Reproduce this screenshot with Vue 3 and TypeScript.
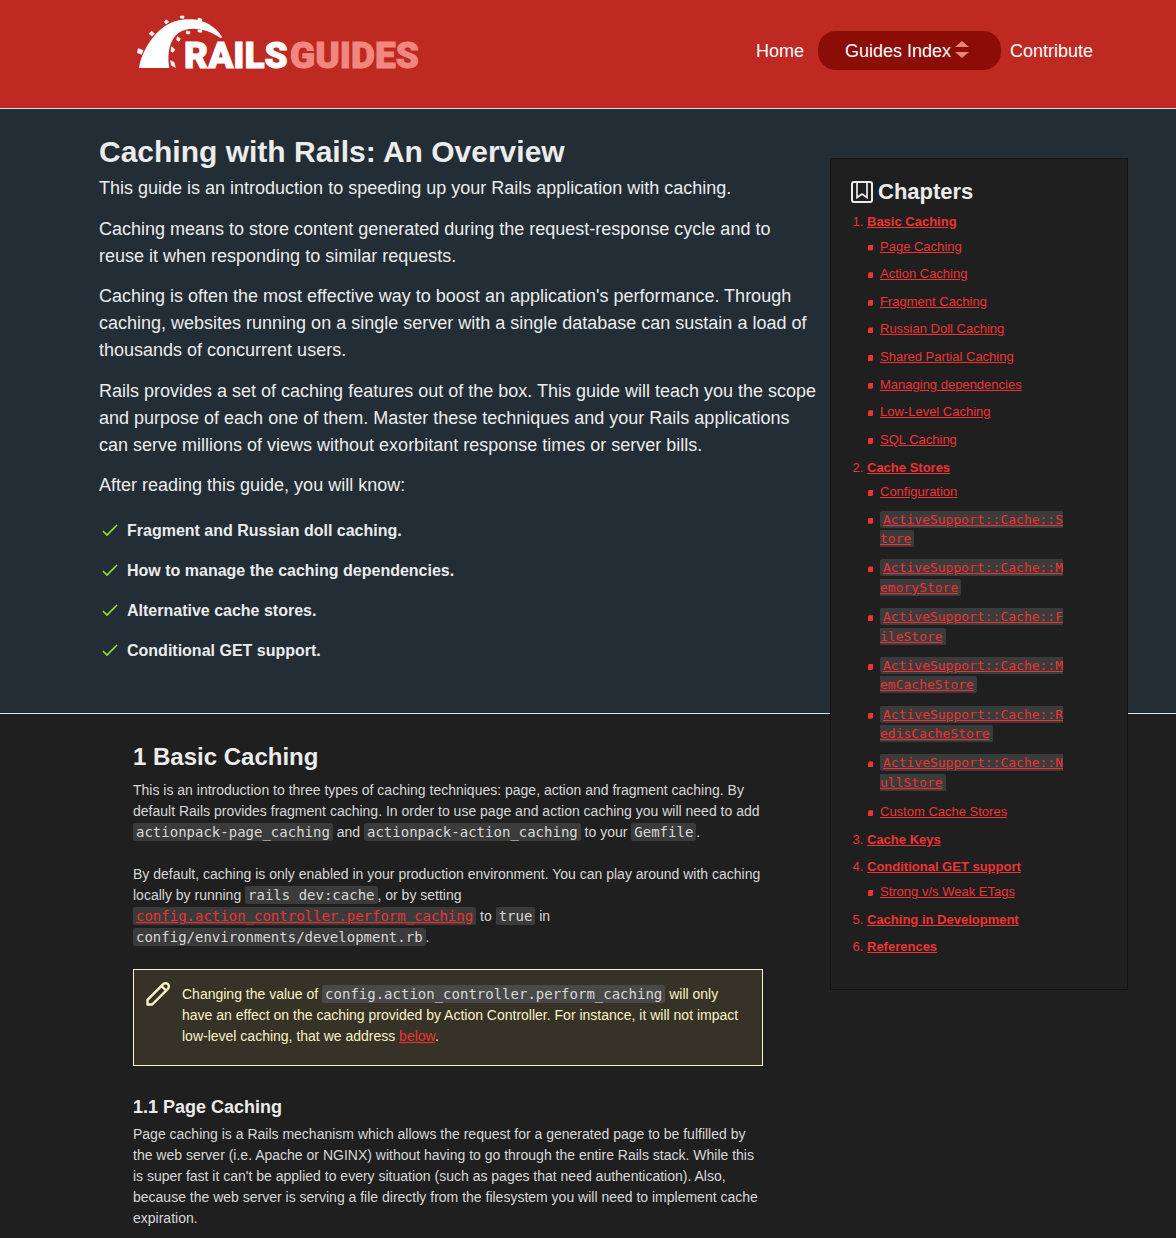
<script setup lang="ts">
interface Topic {
  label: string
  code?: boolean
}

interface Chapter {
  title: string
  topics: Topic[]
}

const chapters: Chapter[] = [
  {
    title: 'Basic Caching',
    topics: [
      { label: 'Page Caching' },
      { label: 'Action Caching' },
      { label: 'Fragment Caching' },
      { label: 'Russian Doll Caching' },
      { label: 'Shared Partial Caching' },
      { label: 'Managing dependencies' },
      { label: 'Low-Level Caching' },
      { label: 'SQL Caching' },
    ],
  },
  {
    title: 'Cache Stores',
    topics: [
      { label: 'Configuration' },
      { label: 'ActiveSupport::Cache::Store', code: true },
      { label: 'ActiveSupport::Cache::MemoryStore', code: true },
      { label: 'ActiveSupport::Cache::FileStore', code: true },
      { label: 'ActiveSupport::Cache::MemCacheStore', code: true },
      { label: 'ActiveSupport::Cache::RedisCacheStore', code: true },
      { label: 'ActiveSupport::Cache::NullStore', code: true },
      { label: 'Custom Cache Stores' },
    ],
  },
  { title: 'Cache Keys', topics: [] },
  { title: 'Conditional GET support', topics: [{ label: 'Strong v/s Weak ETags' }] },
  { title: 'Caching in Development', topics: [] },
  { title: 'References', topics: [] },
]

const goals: string[] = [
  'Fragment and Russian doll caching.',
  'How to manage the caching dependencies.',
  'Alternative cache stores.',
  'Conditional GET support.',
]

const slug = (text: string): string => '#' + text.toLowerCase().replace(/[^a-z]+/g, '-')
</script>

<template>
  <div class="page">
    <header class="topbar">
      <a class="logo" href="#home" aria-label="Rails Guides">
        <svg width="290" height="68" viewBox="0 0 290 68">
          <svg width="86" height="54" viewBox="21 21 258 162" fill="#fff">
            <path d="M27 180C32 140 62 84 104 55C128 38 157 32 186 34C225 37 257 56 277 88L271 90C246 72 216 61 187 62C160 63 139 74 128 95C115 119 113 148 118 180Z" />
            <path stroke="#fff" stroke-width="2" d="M25 122L39 127L35 139L22 134ZM65 70L73 77L66 84L57 77ZM109 35L116 42L108 48L103 41ZM151 24L162 24L161 31L151 30ZM205 30L216 34L213 41L203 38ZM203 66L215 66L215 73L205 72ZM169 69L180 71L178 78L169 77ZM142 86L151 92L147 100L140 96ZM125 116L135 125L129 133L123 130ZM122 158L132 163L136 178L124 172Z" />
          </svg>
          <text class="logo-text" x="47" y="53" fill="#fff" stroke="#fff">RAILS</text>
          <text class="logo-text" x="153" y="53" fill="#f08880" stroke="#f08880">GUIDES</text>
        </svg>
      </a>
      <nav class="nav">
        <a class="nav-link" href="#home">Home</a>
        <button class="index-button" type="button">
          Guides Index
          <svg width="14" height="22" viewBox="0 0 14 22" fill="#e9827b">
            <path d="M7 0L14 6H0ZM0 11H14L7 17Z" />
          </svg>
        </button>
        <a class="nav-link" href="#contribute">Contribute</a>
      </nav>
    </header>

    <div class="content">
      <section class="feature">
        <h1>Caching with Rails: An Overview</h1>
        <p>This guide is an introduction to speeding up your Rails application with caching.</p>
        <p>Caching means to store content generated during the request-response cycle and to reuse it when responding to similar requests.</p>
        <p>Caching is often the most effective way to boost an application's performance. Through caching, websites running on a single server with a single database can sustain a load of thousands of concurrent users.</p>
        <p>Rails provides a set of caching features out of the box. This guide will teach you the scope and purpose of each one of them. Master these techniques and your Rails applications can serve millions of views without exorbitant response times or server bills.</p>
        <p>After reading this guide, you will know:</p>
        <ul class="goals">
          <li v-for="goal in goals" :key="goal">
            <svg width="20" height="20" viewBox="0 0 20 20" fill="none" stroke="#9be22d" stroke-width="1.6">
              <path d="M4 10L8 14L18 4" />
            </svg>
            {{ goal }}
          </li>
        </ul>
      </section>

      <main class="article">
        <h2>1 Basic Caching</h2>
        <p>This is an introduction to three types of caching techniques: page, action and fragment caching. By default Rails provides fragment caching. In order to use page and action caching you will need to add <code>actionpack-page_caching</code> and <code>actionpack-action_caching</code> to your <code>Gemfile</code>.</p>
        <p>By default, caching is only enabled in your production environment. You can play around with caching locally by running <code>rails dev:cache</code>, or by setting <a href="#perform-caching"><code>config.action_controller.perform_caching</code></a> to <code>true</code> in <code>config/environments/development.rb</code>.</p>
        <aside class="note">
          <svg width="26" height="26" viewBox="0 0 26 26" fill="none" stroke="#fbf3c4" stroke-width="2.4" stroke-linejoin="round">
            <path d="M2.500 23.500V18.800L18.200 3.100Q20.500 1.200 22.900 3.100Q24.800 5.500 22.900 7.800L7.200 23.500ZM16.500 5L21 9.500" />
          </svg>
          <p>Changing the value of <code>config.action_controller.perform_caching</code> will only have an effect on the caching provided by Action Controller. For instance, it will not impact low-level caching, that we address <a href="#low-level-caching">below</a>.</p>
        </aside>
        <h3>1.1 Page Caching</h3>
        <p>Page caching is a Rails mechanism which allows the request for a generated page to be fulfilled by the web server (i.e. Apache or NGINX) without having to go through the entire Rails stack. While this is super fast it can't be applied to every situation (such as pages that need authentication). Also, because the web server is serving a file directly from the filesystem you will need to implement cache expiration.</p>
      </main>

      <nav class="chapters" aria-label="Chapters">
        <h2>
          <svg width="22" height="22" viewBox="0 0 22 22" fill="none" stroke="#ececec">
            <rect x="1" y="1" width="20" height="20" rx="2" stroke-width="2" />
            <path d="M6 2V16.500L11 13L16 16.500V2" stroke-width="1.700" />
          </svg>
          Chapters
        </h2>
        <ol>
          <li v-for="chapter in chapters" :key="chapter.title">
            <a class="chapter-link" :href="slug(chapter.title)">{{ chapter.title }}</a>
            <ul v-if="chapter.topics.length">
              <li v-for="topic in chapter.topics" :key="topic.label" :class="{ 'code-topic': topic.code }">
                <a :href="slug(topic.label)"><code v-if="topic.code">{{ topic.label }}</code><template v-else>{{ topic.label }}</template></a>
              </li>
            </ul>
          </li>
        </ol>
      </nav>
    </div>
  </div>
</template>

<style>
body {
  margin: 0;
  background: #1f1f1f;
}
</style>

<style scoped>
.page {
  font-family: "Liberation Sans", Arial, sans-serif;
  font-size: 14px;
  line-height: 21px;
  color: #d8d8d8;
  background: #1f1f1f;
}

h1,
h2,
h3,
p,
ol,
ul {
  margin: 0;
  padding: 0;
}

h1,
h2,
h3 {
  color: #ececec;
}

a {
  color: #ee3333;
}

code {
  padding: 1px 3px;
  border-radius: 2px;
  background: #3b3b3b;
  font-family: "DejaVu Sans Mono", monospace;
  font-size: inherit;
}

.topbar {
  display: flex;
  justify-content: space-between;
  align-items: flex-start;
  box-sizing: border-box;
  height: 109px;
  padding: 15px 83px 0 137px;
  border-bottom: 1px solid #c5e2ea;
  background: #be2922;
}

.logo svg {
  display: block;
}

.logo-text {
  font-family: Roboto, sans-serif;
  font-size: 37px;
  font-weight: 900;
  stroke-width: 1px;
}

.nav {
  display: flex;
  align-items: center;
  margin-top: 16px;
  font-size: 18px;
}

.nav-link {
  padding-top: 2px;
  color: #fff;
  text-decoration: none;
}

.index-button {
  display: flex;
  align-items: center;
  justify-content: center;
  gap: 4px;
  box-sizing: border-box;
  width: 183px;
  height: 39px;
  margin: 0 9px 0 14px;
  padding: 2px 5px 0 0;
  border: 0;
  border-radius: 18px;
  background: #8c0d08;
  color: #fff;
  font: inherit;
}

.content {
  position: relative;
}

.feature {
  padding: 25px 358px 34px 99px;
  border-bottom: 1px solid #d4e6ee;
  background: #222d36;
  color: #ececec;
  font-size: 18px;
  line-height: 27px;
}

.feature h1 {
  margin-bottom: 5px;
  font-size: 30px;
  line-height: 36px;
}

.feature p {
  margin-bottom: 0.75em;
}

.goals {
  margin-top: 20px;
  font-size: 16px;
  font-weight: bold;
  line-height: 24px;
  list-style: none;
}

.goals li {
  display: flex;
  align-items: center;
  gap: 8px;
  margin-bottom: 16px;
}

.article {
  max-width: 630px;
  padding: 28px 0 9px 133px;
}

.article > h2 {
  margin-bottom: 8px;
  font-size: 24px;
  line-height: 30px;
}

.article > h3 {
  margin: 30px 0 6px;
  font-size: 18px;
  line-height: 22px;
}

.article > p + p {
  margin-top: 21px;
}

.note {
  display: flex;
  align-items: flex-start;
  gap: 11px;
  margin-top: 21px;
  padding: 14px 18px 18px 11px;
  border: 1px solid #fbf3c4;
  background: #363227;
  color: #fbf3c4;
}

.note svg {
  flex: none;
  margin-top: -3px;
}

.note code {
  background: #494949;
  color: #d8d8d8;
}

.chapters {
  position: absolute;
  top: 49px;
  right: 48px;
  box-sizing: border-box;
  width: 298px;
  padding: 20px 60px 24px 20px;
  border: 1px solid #141414;
  background: #1f1f1f;
  color: #ee3333;
  font-size: 13px;
  line-height: 1.5;
}

.chapters h2 {
  display: flex;
  align-items: center;
  gap: 5px;
  margin-bottom: 7px;
  font-size: 22px;
  line-height: 26px;
}

.chapters ol {
  padding-left: 16px;
}

.chapters li {
  margin-bottom: 0.625em;
}

.chapters ul {
  margin-top: 5px;
  padding-left: 1px;
  list-style: none;
}

.chapters ul li {
  display: flex;
  align-items: flex-start;
  gap: 7px;
}

.chapters ul li::before {
  content: "";
  flex: none;
  width: 5px;
  height: 6px;
  margin-top: 8px;
  background: #ee3333;
  clip-path: polygon(1px 0, 100% 0, 100% 5px, 4px 100%, 0 100%, 0 1px);
}

.chapters ul a {
  word-break: break-all;
}

.chapters ul .code-topic {
  margin-bottom: 0.75em;
}

.chapter-link {
  font-weight: bold;
}
</style>
